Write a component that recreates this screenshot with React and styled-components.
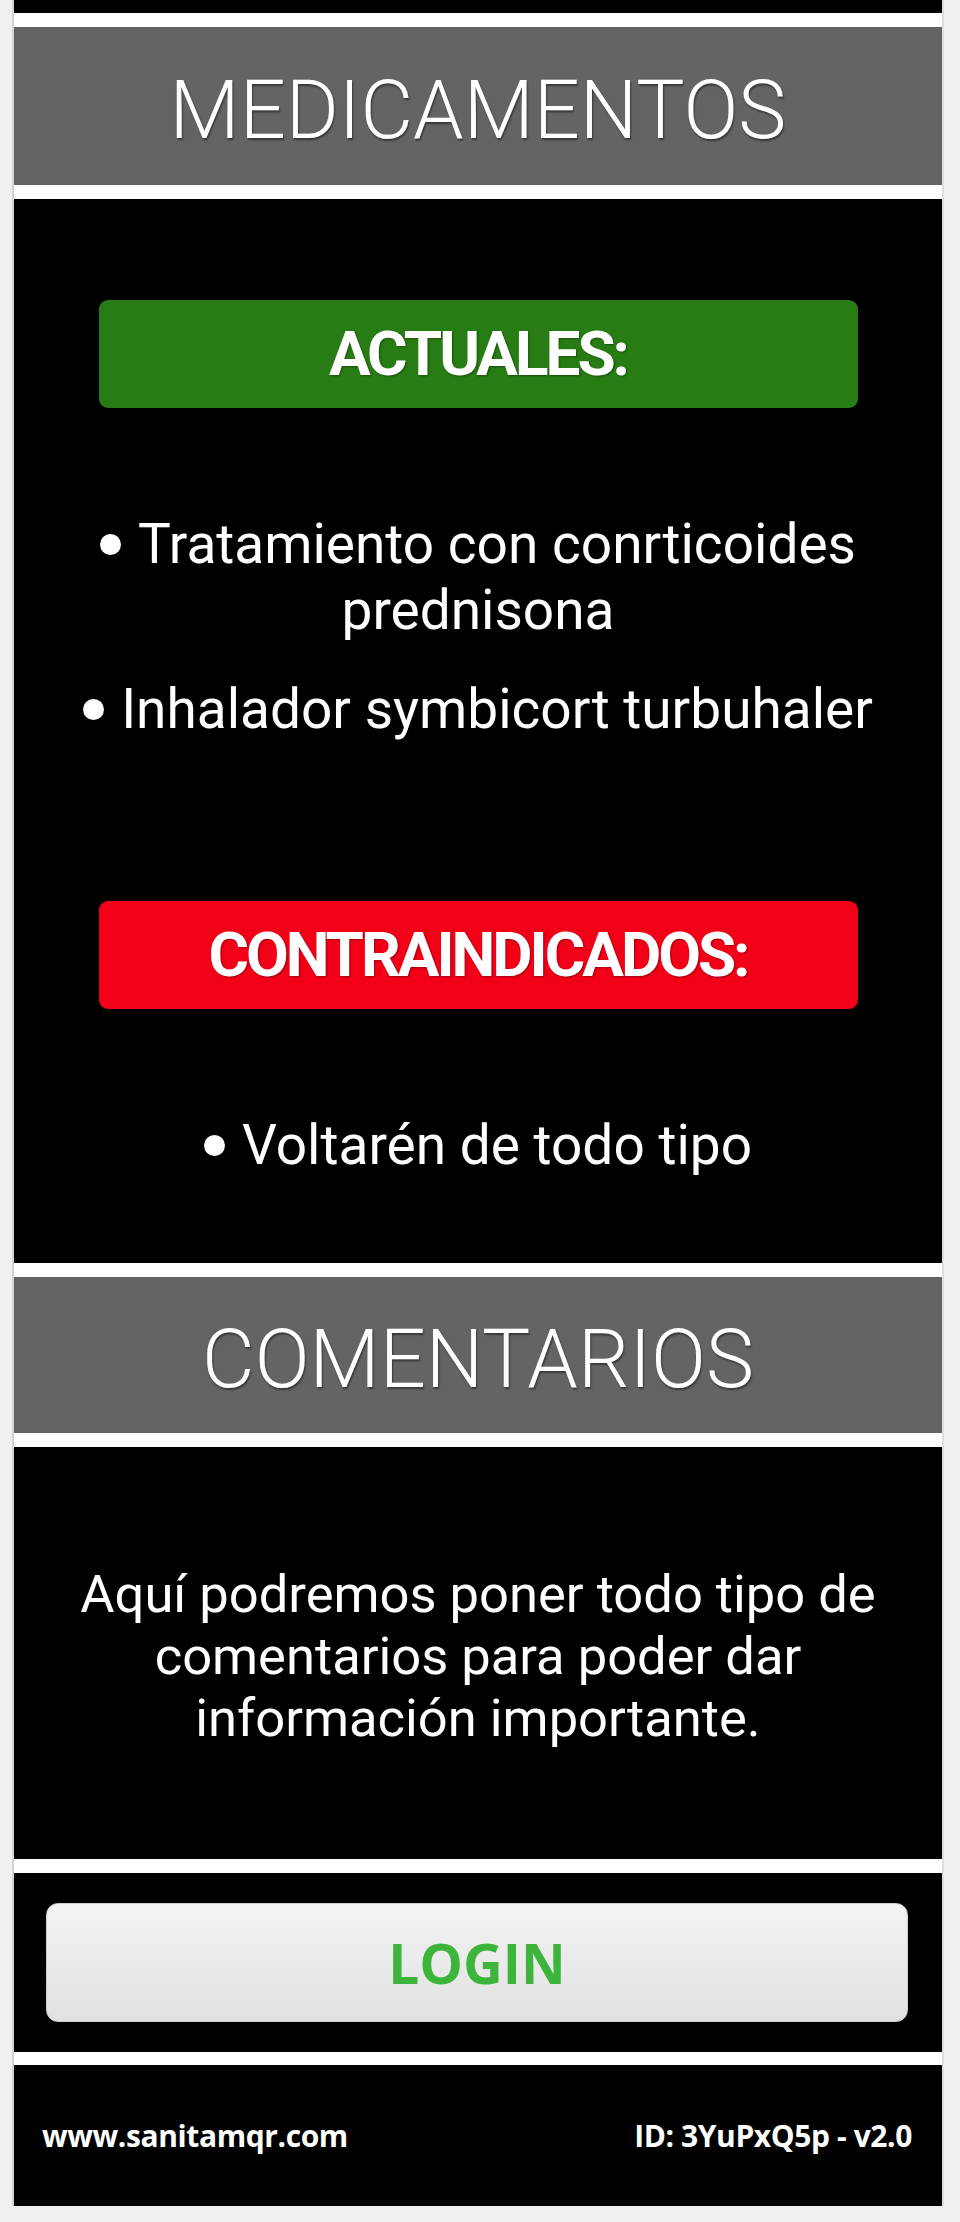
import React from 'react';
import styled, { createGlobalStyle } from 'styled-components';

const GlobalStyle = createGlobalStyle`
  html, body {
    margin: 0;
    padding: 0;
    background: #f0f0f0;
  }
  body {
    font-family: Roboto, "Noto Sans", "Liberation Sans", sans-serif;
    -webkit-font-smoothing: antialiased;
  }
  * { box-sizing: border-box; }
`;

const Page = styled.main`
  width: 932px;
  margin: 0 0 16px 12px;
  border-left: 2px solid #d3d3d3;
  border-right: 2px solid #dedede;
  background: #000;
  display: flex;
  flex-direction: column;
`;

const TopStrip = styled.div`
  height: 13px;
  background: #000;
`;

const Rule = styled.div`
  height: ${(p) => p.$size}px;
  background: #fff;
`;

const SectionTitle = styled.h2`
  margin: 0;
  height: ${(p) => p.$height}px;
  background: #646464;
  border-top: 14px solid #fff;
  border-bottom: 14px solid #fff;
  box-sizing: content-box;
  display: flex;
  align-items: center;
  justify-content: center;
  color: #fff;
  font-family: Roboto, "Noto Sans", sans-serif;
  font-weight: 300;
  font-size: 81px;
  line-height: 1;
  text-shadow: 1px 2px 2px rgba(0, 0, 0, 0.45);

  & > span {
    transform: translateY(4px);
  }
`;

const Panel = styled.section`
  background: #000;
  padding: ${(p) => p.$pad};
  display: flex;
  flex-direction: column;
  align-items: stretch;
`;

const Group = styled.div`
  display: flex;
  flex-direction: column;
  & + & {
    margin-top: 159px;
  }
`;

const Badge = styled.div`
  align-self: center;
  width: 759px;
  height: 108px;
  border-radius: 9px;
  background: ${(p) => (p.$tone === 'danger' ? '#f20017' : '#277c13')};
  display: flex;
  align-items: center;
  justify-content: center;
  color: #fff;
  font-family: Roboto, "Noto Sans", sans-serif;
  font-weight: 700;
  font-size: 62px;
  line-height: 1;
  letter-spacing: -3px;
  margin-bottom: 103px;
  text-shadow: 1px 1px 2px rgba(0, 0, 0, 0.35);
`;

const ItemList = styled.ul`
  list-style: none;
  margin: 0;
  padding: 0 16px;
  text-align: center;
  color: #fff;
  font-family: Roboto, "Noto Sans", sans-serif;
  font-size: 55px;
  line-height: 66px;
`;

const Item = styled.li`
  & + & {
    margin-top: 33px;
  }
`;

const Dot = styled.span`
  display: inline-block;
  width: 21px;
  height: 21px;
  border-radius: 50%;
  background: #fff;
  margin: 0 17px 8px 0;
  vertical-align: baseline;
`;

const Note = styled.p`
  margin: 0;
  padding: 0 40px;
  text-align: center;
  color: #fff;
  font-family: Roboto, "Noto Sans", sans-serif;
  font-size: 52.5px;
  line-height: 62px;
`;

const LoginBar = styled.div`
  background: #000;
  padding: 30px 34px 30px 32px;
`;

const LoginButton = styled.button`
  display: flex;
  align-items: center;
  justify-content: center;
  width: 100%;
  height: 119px;
  border: 1px solid #cfcfcf;
  border-radius: 12px;
  background: linear-gradient(#f3f3f3, #e1e1e1);
  color: #3db43b;
  font-family: "Open Sans", "Noto Sans", sans-serif;
  font-weight: 700;
  font-size: 55px;
  line-height: 1;
  cursor: pointer;
`;

const Footer = styled.footer`
  height: 141px;
  background: #000;
  display: flex;
  align-items: center;
  justify-content: space-between;
  padding: 0 30px 0 28px;
  color: #fff;
  font-family: "Open Sans", "Noto Sans", sans-serif;
  font-weight: 700;
  font-size: 30px;
  letter-spacing: -0.4px;
`;

const FooterText = styled.span`
  white-space: nowrap;
`;

const current = [
  'Tratamiento con conrticoides prednisona',
  'Inhalador symbicort turbuhaler',
];

const avoid = ['Voltarén de todo tipo'];

function MedList({ items }) {
  return (
    <ItemList>
      {items.map((text) => (
        <Item key={text}>
          <Dot />
          {text}
        </Item>
      ))}
    </ItemList>
  );
}

export default function App() {
  return (
    <>
      <GlobalStyle />
      <Page>
        <TopStrip />
        <SectionTitle $height={158}>
          <span>MEDICAMENTOS</span>
        </SectionTitle>
        <Panel $pad="101px 0 85px">
          <Group>
            <Badge $tone="ok">ACTUALES:</Badge>
            <MedList items={current} />
          </Group>
          <Group>
            <Badge $tone="danger">CONTRAINDICADOS:</Badge>
            <MedList items={avoid} />
          </Group>
        </Panel>
        <SectionTitle $height={156}>
          <span>COMENTARIOS</span>
        </SectionTitle>
        <Panel $pad="116px 0 110px">
          <Note>
            Aquí podremos poner todo tipo de comentarios para poder dar
            información importante.
          </Note>
        </Panel>
        <Rule $size={14} />
        <LoginBar>
          <LoginButton type="button">LOGIN</LoginButton>
        </LoginBar>
        <Rule $size={13} />
        <Footer>
          <FooterText>www.sanitamqr.com</FooterText>
          <FooterText>ID: 3YuPxQ5p - v2.0</FooterText>
        </Footer>
      </Page>
    </>
  );
}
